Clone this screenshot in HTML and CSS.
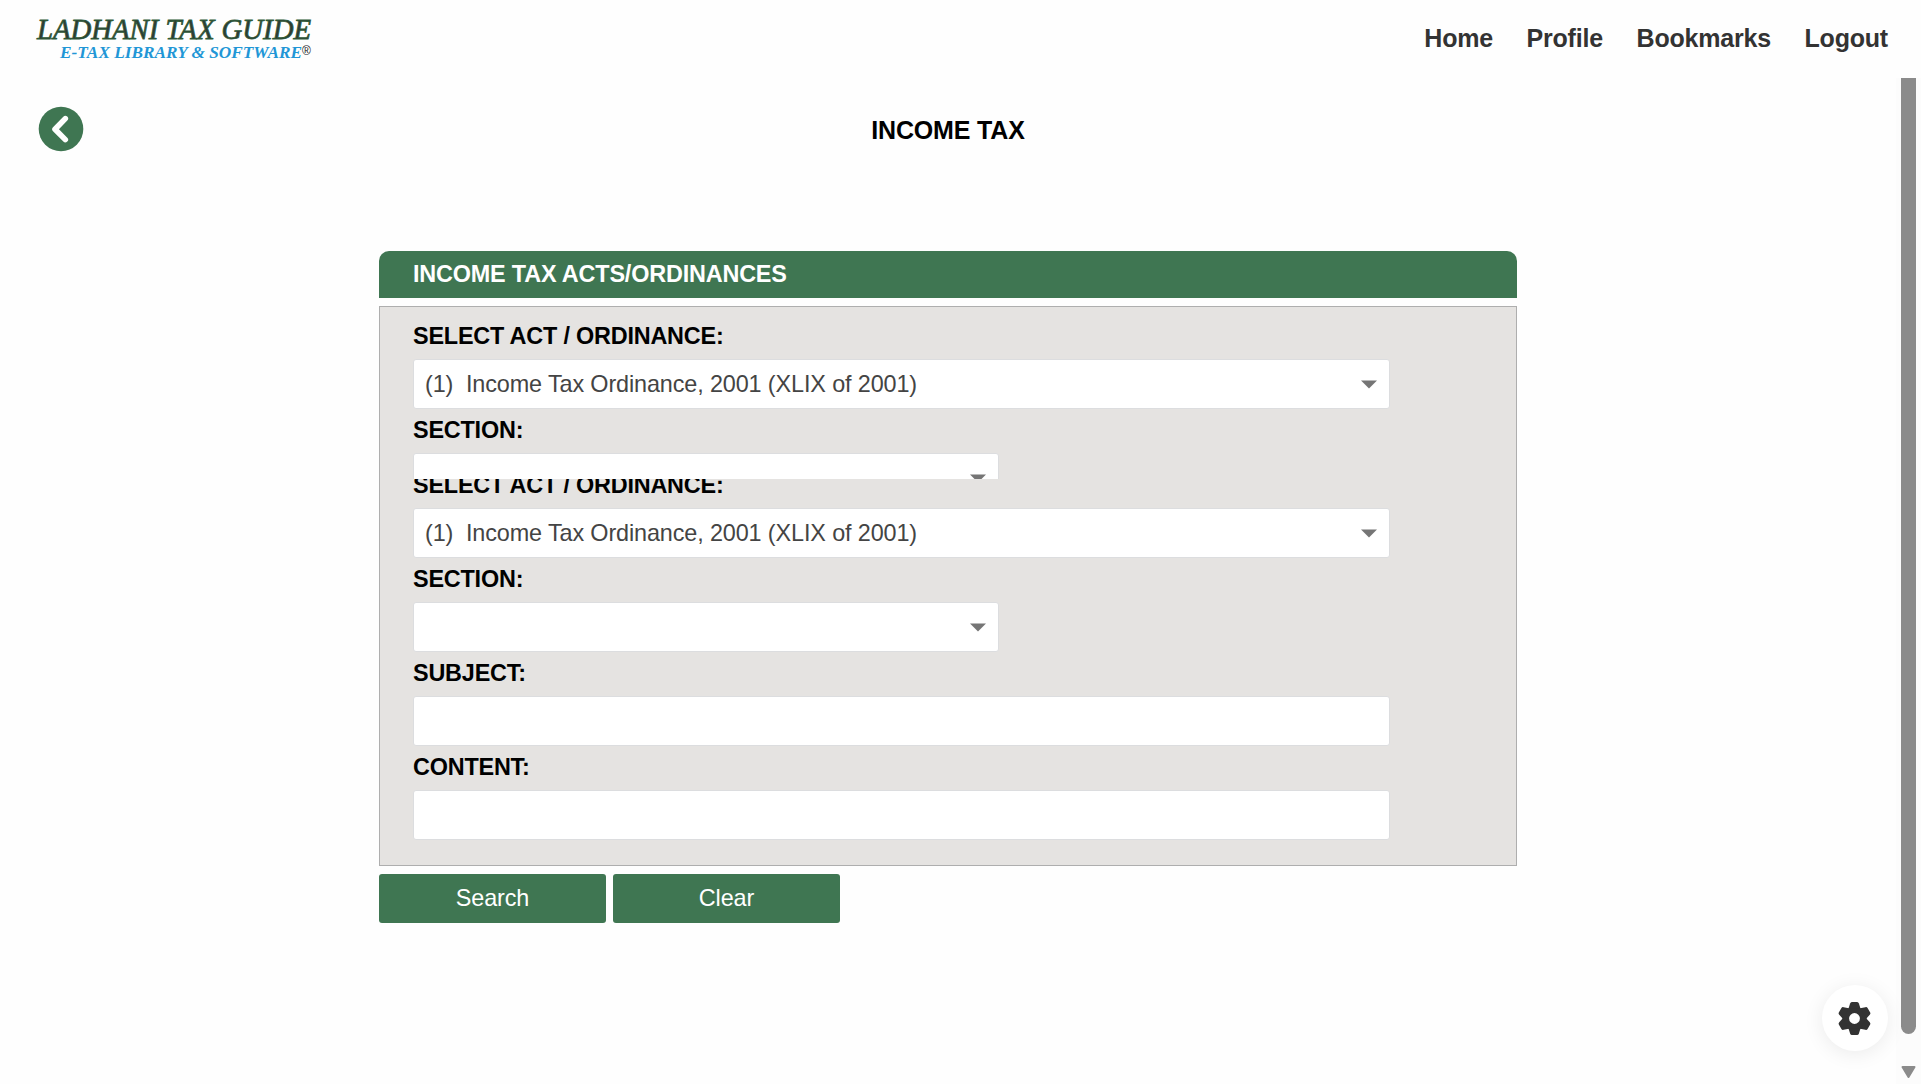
FILE: index.html
```html
<!DOCTYPE html>
<html lang="en">
<head>
<meta charset="utf-8">
<title>Ladhani Tax Guide</title>
<link rel="stylesheet" href="styles.css">
</head>
<body>
<header class="topbar">
  <svg class="logo" width="320" height="78" viewBox="0 0 320 78">
    <text class="logo-name" x="37" y="39" textLength="274" lengthAdjust="spacingAndGlyphs">LADHANI TAX GUIDE</text>
    <text class="logo-tag" x="60" y="58" textLength="242" lengthAdjust="spacingAndGlyphs">E-TAX LIBRARY &amp; SOFTWARE</text>
    <text class="logo-mark" x="302" y="55">®</text>
  </svg>
  <nav class="nav"><a>Home</a><a>Profile</a><a>Bookmarks</a><a>Logout</a></nav>
</header>
<div class="body">
  <main class="page">
    <div class="heading">
      <button class="back" aria-label="Back">
        <svg width="46" height="46" viewBox="0 0 46 46"><circle cx="23" cy="23" r="22.3" fill="#3f7652"/><path d="M27.3 12.6 17 23.2l10.3 10.4" fill="none" stroke="#fff" stroke-width="5.6" stroke-linecap="round" stroke-linejoin="round"/></svg>
      </button>
      <h1 class="title">INCOME TAX</h1>
    </div>
    <section class="card">
      <h2 class="card-title">INCOME TAX ACTS/ORDINANCES</h2>
      <div class="panel">
        <div class="slice slice-top">
          <div class="fields">
            <label class="label">SELECT ACT / ORDINANCE:</label>
            <div class="field"><span>(1)&nbsp; Income Tax Ordinance, 2001 (XLIX of 2001)</span><svg class="caret" width="16" height="9" viewBox="0 0 16 9"><path d="M0 .5h16L8 8.5z"/></svg></div>
            <label class="label">SECTION:</label>
            <div class="field short"><span></span><svg class="caret" width="16" height="9" viewBox="0 0 16 9"><path d="M0 .5h16L8 8.5z"/></svg></div>
          </div>
        </div>
        <div class="slice slice-rest">
          <div class="fields">
            <label class="label">SELECT ACT / ORDINANCE:</label>
            <div class="field"><span>(1)&nbsp; Income Tax Ordinance, 2001 (XLIX of 2001)</span><svg class="caret" width="16" height="9" viewBox="0 0 16 9"><path d="M0 .5h16L8 8.5z"/></svg></div>
            <label class="label">SECTION:</label>
            <div class="field short"><span></span><svg class="caret" width="16" height="9" viewBox="0 0 16 9"><path d="M0 .5h16L8 8.5z"/></svg></div>
            <label class="label">SUBJECT:</label>
            <div class="field"></div>
            <label class="label">CONTENT:</label>
            <div class="field"></div>
          </div>
        </div>
      </div>
      <div class="actions"><button class="btn">Search</button><button class="btn">Clear</button></div>
    </section>
  </main>
  <div class="scrollbar">
    <div class="thumb"></div>
    <svg width="15" height="13" viewBox="0 0 15 13"><path d="M1.5 1h12L7.5 11z" fill="#8b8b8b" stroke="#8b8b8b" stroke-width="2" stroke-linejoin="round"/></svg>
  </div>
</div>
<button class="settings" aria-label="Settings">
  <svg width="40" height="40" viewBox="-19.5 -20.5 40 40" fill="#333">
    <defs><path id="tooth" d="M-6-10-4.4-15.1Q-3.9-16.6-2.6-16.6H2.6Q3.9-16.6 4.4-15.1L6-10z"/></defs>
    <circle r="8.7" fill="none" stroke="#333" stroke-width="6.6"/>
    <use href="#tooth"/>
    <use href="#tooth" transform="rotate(60)"/>
    <use href="#tooth" transform="rotate(120)"/>
    <use href="#tooth" transform="rotate(180)"/>
    <use href="#tooth" transform="rotate(240)"/>
    <use href="#tooth" transform="rotate(300)"/>
  </svg>
</button>
</body>
</html>
```
FILE: styles.css
```css
* { box-sizing: border-box; }
body {
  margin: 0;
  height: 1084px;
  display: flex;
  flex-direction: column;
  overflow: hidden;
  background: #fefefe;
  font-family: "Liberation Sans", Arial, sans-serif;
  color: #000;
}
button { border: 0; padding: 0; font: inherit; background: none; }
.topbar {
  height: 78px;
  flex: none;
  display: flex;
  justify-content: space-between;
  padding-right: 33px;
}
.logo { display: block; font-family: "Liberation Serif", "Times New Roman", serif; }
.logo-name { font-size: 29px; font-style: italic; fill: #2d3a35; stroke: #2f5b38; stroke-width: .8px; }
.logo-tag { font-size: 17.5px; font-style: italic; font-weight: bold; fill: #2196d6; }
.logo-mark { font-family: "Liberation Sans", Arial, sans-serif; font-size: 12px; fill: #222; }
.nav {
  display: flex;
  gap: 33.6px;
  padding-top: 24px;
  font-size: 25px;
  line-height: 28px;
  font-weight: bold;
  letter-spacing: -.2px;
  color: #333;
}
.body { flex: 1; display: flex; min-height: 0; }
.page { flex: 1; }
.heading {
  height: 173px;
  padding: 28px 0 0 38px;
  display: flex;
  align-items: flex-start;
}
.back { width: 46px; height: 46px; }
.back svg { display: block; }
.title {
  flex: 1;
  margin: 10px 84px 0 0;
  text-align: center;
  font-size: 25px;
  line-height: 28px;
  letter-spacing: -.15px;
}
.card { width: 1138px; margin-left: 379px; }
.card-title {
  margin: 0 0 8px;
  height: 47px;
  padding-left: 34px;
  border-radius: 10px 10px 0 0;
  background: #3f7652;
  color: #fff;
  font-size: 23.4px;
  line-height: 46px;
  letter-spacing: -.17px;
}
.panel { height: 560px; border: 1px solid #aeaeae; background: #e5e3e1; }
.slice { overflow: hidden; }
.slice-top { height: 172px; }
.slice-rest { height: 386px; }
.slice-rest .fields { margin-top: -23px; }
.fields { display: flow-root; padding: 8px 126px 0 33px; }
.label {
  display: block;
  height: 44px;
  line-height: 42px;
  font-size: 23.4px;
  font-weight: bold;
  letter-spacing: -.19px;
}
.field {
  height: 50px;
  padding: 0 12px 0 11px;
  border: 1px solid #dcdddf;
  border-radius: 3px;
  background: #fff;
  display: flex;
  align-items: center;
  justify-content: space-between;
  font-size: 23.4px;
  letter-spacing: -.12px;
  color: #444;
}
.short { width: 586px; }
.caret { fill: #757575; }
.actions { display: flex; gap: 7px; margin-top: 8px; }
.btn {
  width: 227px;
  height: 49px;
  border-radius: 3px;
  background: #3f7652;
  color: #fff;
  font-size: 23.4px;
  letter-spacing: -.12px;
}
.scrollbar {
  width: 25px;
  padding-left: 5px;
  background: #fcfcfc;
  display: flex;
  flex-direction: column;
  gap: 32px;
}
.thumb { width: 15px; height: 956px; background: #8b8b8b; border-radius: 0 0 7.5px 7.5px; }
.settings {
  position: absolute;
  left: 1822px;
  top: 985px;
  width: 66px;
  height: 66px;
  border-radius: 50%;
  background: #fff;
  box-shadow: 0 3px 20px rgba(0, 0, 0, .08);
  display: flex;
  align-items: center;
  justify-content: center;
}
```
